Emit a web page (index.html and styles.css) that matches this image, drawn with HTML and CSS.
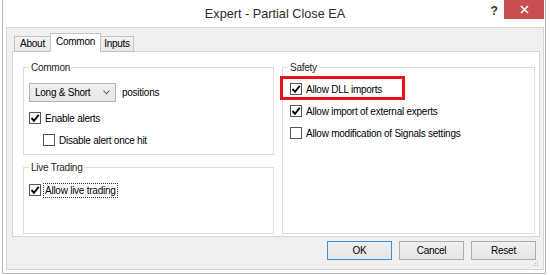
FILE: index.html
```html
<!DOCTYPE html>
<html lang="en">

<head>
    <meta charset="UTF-8">
    <meta name="viewport" content="width=device-width, initial-scale=1.0">
    <title>Expert - Partial Close EA</title>

    <link rel="stylesheet" href="styles.css">
</head>

<body>
    <div class="window">
        <div class="titlebar">
            <span></span>
            <span class="caption">Expert - Partial Close EA</span>
            <div class="controls">
                <span class="help">?</span>
                <span class="close">
                    <svg width="9" height="9" viewBox="0 0 9 9"><path d="M1 1 L8 8 M8 1 L1 8" stroke="#fff" stroke-width="1.6" fill="none"/></svg>
                </span>
            </div>
        </div>

        <div class="client">
            <div class="tabs">
                <div class="tab">About</div>
                <div class="tab active">Common</div>
                <div class="tab">Inputs</div>
            </div>

            <div class="panel">
                <div class="col">
                    <div class="group common">
                        <div class="group-title">Common</div>
                        <div class="row select-row">
                            <div class="select">Long &amp; Short
                                <svg width="7" height="5" viewBox="0 0 7 5"><path d="M0.5 0.5 L3.5 3.8 L6.5 0.5" stroke="#555" stroke-width="1.1" fill="none"/></svg>
                            </div>
                            <span>positions</span>
                        </div>
                        <div class="row check-row first">
                            <span class="box checked"><svg width="10" height="10" viewBox="0 0 10 10"><path d="M1.5 5 L4 7.8 L8.7 1.8" stroke="#000" stroke-width="1.9" fill="none"/></svg></span>
                            <span>Enable alerts</span>
                        </div>
                        <div class="row check-row indent">
                            <span class="box"></span>
                            <span>Disable alert once hit</span>
                        </div>
                    </div>

                    <div class="group live">
                        <div class="group-title">Live Trading</div>
                        <div class="row check-row first">
                            <span class="box checked"><svg width="10" height="10" viewBox="0 0 10 10"><path d="M1.5 5 L4 7.8 L8.7 1.8" stroke="#000" stroke-width="1.9" fill="none"/></svg></span>
                            <span class="focus">Allow live trading</span>
                        </div>
                    </div>
                </div>

                <div class="group safety">
                    <div class="group-title">Safety</div>
                    <div class="row check-row first highlight">
                        <span class="box checked"><svg width="10" height="10" viewBox="0 0 10 10"><path d="M1.5 5 L4 7.8 L8.7 1.8" stroke="#000" stroke-width="1.9" fill="none"/></svg></span>
                        <span>Allow DLL imports</span>
                    </div>
                    <div class="row check-row">
                        <span class="box checked"><svg width="10" height="10" viewBox="0 0 10 10"><path d="M1.5 5 L4 7.8 L8.7 1.8" stroke="#000" stroke-width="1.9" fill="none"/></svg></span>
                        <span>Allow import of external experts</span>
                    </div>
                    <div class="row check-row">
                        <span class="box"></span>
                        <span>Allow modification of Signals settings</span>
                    </div>
                </div>
            </div>

            <div class="buttons">
                <button class="default">OK</button>
                <button>Cancel</button>
                <button>Reset</button>
            </div>

            <div class="grip">
                <svg width="7" height="7" viewBox="0 0 7 7" fill="#b8b8b8">
                    <rect x="5" y="0" width="1" height="1"/>
                    <rect x="3" y="2" width="1" height="1"/><rect x="5" y="2" width="1" height="1"/>
                    <rect x="1" y="4" width="1" height="1"/><rect x="3" y="4" width="1" height="1"/><rect x="5" y="4" width="1" height="1"/>
                </svg>
            </div>
        </div>
    </div>
</body>

</html>
```

FILE: styles.css
```css
body {
    margin: 0;
    background-color: #fff;
    font-family: "Liberation Sans", Arial, sans-serif;
    font-size: 10px;
    letter-spacing: -0.25px;
    color: #000;
}

.window {
    box-sizing: border-box;
    display: flex;
    flex-direction: column;
    width: 544px;
    height: 275px;
    margin: -1px 0 0 2px;
    padding: 0 1px 3px 3px;
    border: 1px solid #b8b8b8;
    background-color: #fff;
}

.titlebar {
    display: grid;
    grid-template-columns: 1fr auto 1fr;
    height: 27px;
}

.caption {
    padding-top: 7px;
    font-size: 12.7px;
    letter-spacing: 0;
    color: #2b2b2b;
}

.controls {
    display: flex;
    justify-content: flex-end;
    align-items: flex-start;
}

.help {
    width: 20px;
    padding-top: 4px;
    font-size: 12px;
    font-weight: bold;
    text-align: center;
    color: #333;
}

.close {
    display: flex;
    justify-content: center;
    align-items: center;
    width: 40px;
    height: 19px;
    background-color: #c75050;
}

.client {
    box-sizing: border-box;
    display: flex;
    flex-direction: column;
    height: 243px;
    padding: 5px 3px 0 5px;
    border: 1px solid #d6d6d6;
    background-color: #f0f0f0;
}

.tabs {
    position: relative;
    z-index: 1;
    display: flex;
    align-items: flex-end;
    height: 19px;
    margin: 0 0 -1px 2px;
}

.tab {
    box-sizing: border-box;
    height: 16px;
    line-height: 14px;
    text-align: center;
    border: 1px solid #c3c3c3;
    background: linear-gradient(#f3f3f3, #e8e8e8);
}

.tab:nth-child(1) {
    width: 37px;
}

.tab:nth-child(2) {
    width: 51px;
    margin-left: -1px;
}

.tab:nth-child(3) {
    width: 34px;
    margin-left: -1px;
}

.tab.active {
    height: 19px;
    line-height: 16px;
    border-bottom-color: #fff;
    background: #fff;
}

.panel {
    box-sizing: border-box;
    display: grid;
    grid-template-columns: 251px 253px;
    column-gap: 8px;
    height: 186px;
    padding: 15px 3px 2px 10px;
    border: 1px solid #d6d6d6;
    background-color: #fff;
}

.col {
    display: flex;
    flex-direction: column;
    gap: 12px;
}

.group {
    box-sizing: border-box;
    display: flex;
    flex-direction: column;
    padding-left: 5px;
    border: 1px solid #dcdcdc;
    background-color: #fff;
}

.group.common {
    height: 88px;
}

.group.live {
    flex: 1;
}

.group-title {
    width: fit-content;
    margin-top: -7px;
    padding: 0 2px;
    line-height: 13px;
    background-color: #fff;
    color: #1e1e1e;
}

.row {
    display: flex;
    align-items: center;
}

.select-row {
    gap: 6px;
    margin-top: 9px;
}

.select {
    box-sizing: border-box;
    display: flex;
    justify-content: space-between;
    align-items: center;
    width: 87px;
    height: 19px;
    padding: 0 5px 0 5px;
    border: 1px solid #b4b4b4;
    background: linear-gradient(#f2f2f2, #e6e6e6);
}

.check-row {
    gap: 4px;
    height: 22px;
}

.common .check-row.first {
    margin-top: 5px;
}

.live .check-row.first {
    margin-top: 5px;
}

.safety .check-row {
    margin-left: 2px;
}

.safety .check-row.first {
    margin-top: 4px;
}

.check-row.indent {
    margin-left: 14px;
}

.box {
    box-sizing: border-box;
    display: flex;
    justify-content: center;
    align-items: center;
    width: 12px;
    height: 12px;
    border: 1px solid #555;
    background-color: #fff;
}

.focus {
    margin-left: -2px;
    padding: 1px 1px;
    border: 1px dotted #333;
}

.highlight {
    position: relative;
}

.highlight::after {
    content: "";
    position: absolute;
    left: -10px;
    top: -2px;
    width: 125px;
    height: 24px;
    box-sizing: border-box;
    border: 3px solid #e8141c;
}

.buttons {
    display: flex;
    justify-content: flex-end;
    gap: 7px;
    margin: 4px 4px 0 0;
}

button {
    box-sizing: border-box;
    width: 65px;
    height: 19px;
    padding: 0;
    font-family: inherit;
    font-size: 10px;
    letter-spacing: -0.25px;
    color: #000;
    border: 1px solid #adadad;
    background: linear-gradient(#f0f0f0, #e5e5e5);
}

button.default {
    border-color: #3c8fd8;
}

.grip {
    display: flex;
    justify-content: flex-end;
    margin: 1px 1px 0 0;
}
```
